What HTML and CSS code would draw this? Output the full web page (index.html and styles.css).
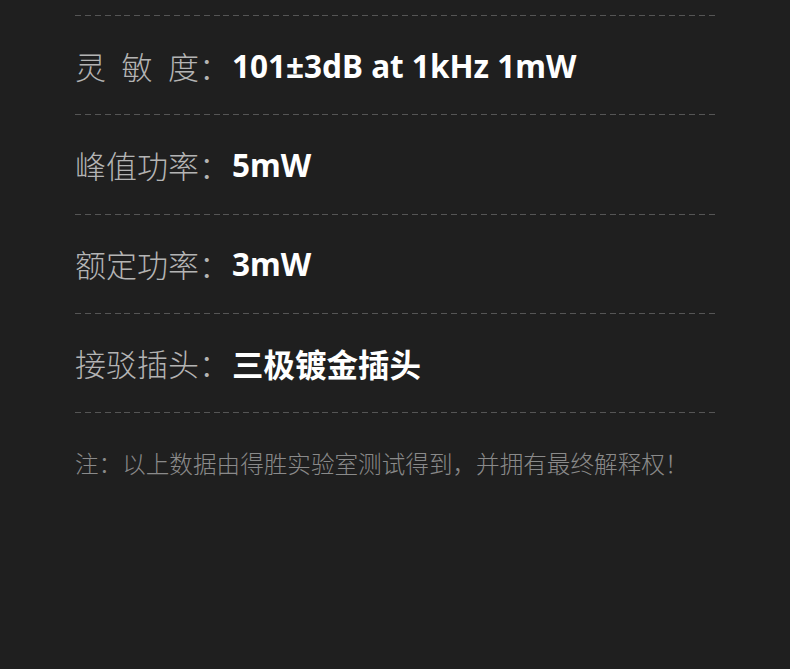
FILE: index.html
```html
<!DOCTYPE html>
<html lang="zh-CN">
<head>
  <meta charset="UTF-8" />
  <meta name="viewport" content="width=device-width, initial-scale=1" />
  <title>产品参数</title>
  <link rel="stylesheet" href="styles.css">
</head>
<body>
  <div class="specs">
    <div class="rule"></div>
    <div class="row">
      <span class="label"><span class="name">灵敏度</span>：</span>
      <span class="value">101±3dB at 1kHz 1mW</span>
    </div>
    <div class="rule"></div>
    <div class="row">
      <span class="label"><span class="name">峰值功率</span>：</span>
      <span class="value">5mW</span>
    </div>
    <div class="rule"></div>
    <div class="row">
      <span class="label"><span class="name">额定功率</span>：</span>
      <span class="value">3mW</span>
    </div>
    <div class="rule"></div>
    <div class="row">
      <span class="label"><span class="name">接驳插头</span>：</span>
      <span class="value">三极镀金插头</span>
    </div>
    <div class="rule"></div>
    <p class="note">注：以上数据由得胜实验室测试得到，并拥有最终解释权！</p>
  </div>
</body>
</html>
```

FILE: styles.css
```css
* {
  box-sizing: border-box;
}

html, body {
  margin: 0;
  height: 100%;
}

body {
  background: #1f1f1f;
  font-family: "Noto Sans CJK SC", "Noto Sans", sans-serif;
}

.specs {
  padding: 15px 75px 0;
}

/* dashed divider: 65 dashes of 6px across 640px */
.rule {
  height: 1px;
  background: repeating-linear-gradient(to right, #555 0, #555 6px, transparent 6px, transparent 9.9px);
}

.row {
  height: 98.25px;
  display: flex;
  align-items: center;
  font-size: 31px;
}

.label {
  display: flex;
  color: #b4b4b4;
  font-weight: 300;
  width: 157px;
  flex-shrink: 0;
}

.name {
  display: inline-block;
  width: 124px;
  text-align-last: justify;
}

.value {
  color: #fff;
  font-weight: 700;
  font-family: "Noto Sans", "Noto Sans CJK SC", sans-serif;
  font-size: 31.5px;
}

.note {
  margin: 33px 0 0;
  font-size: 23.6px;
  font-weight: 300;
  color: #8a8a8a;
}
```
